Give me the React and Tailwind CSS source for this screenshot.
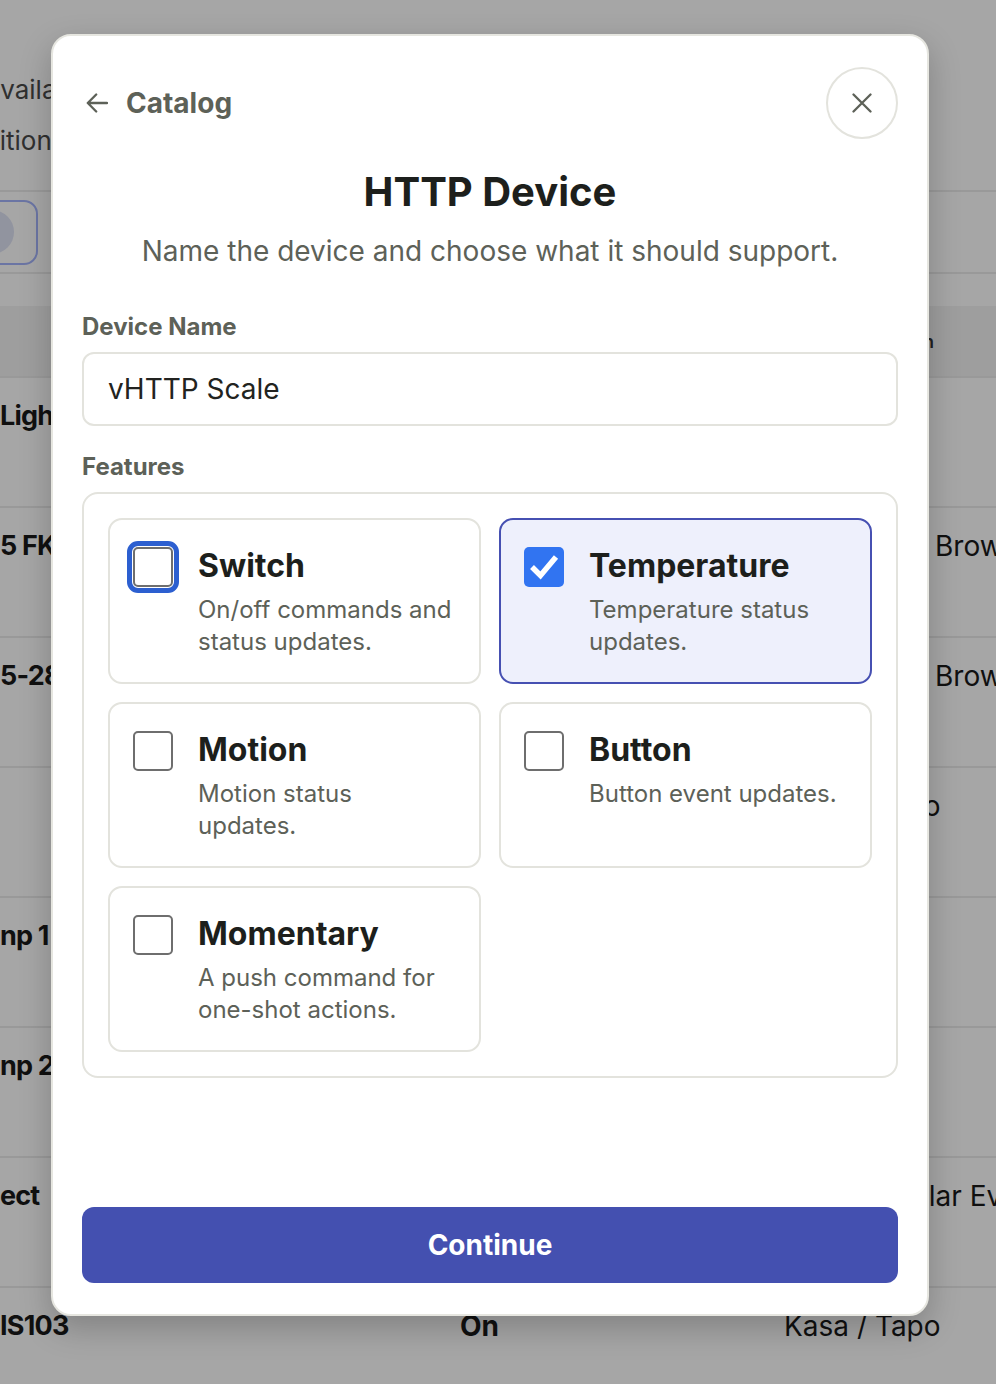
import React from "react";

function Check({ checked, focused }) {
  if (checked) {
    return (
      <div className="w-[40px] h-[40px] shrink-0 rounded-[5px] bg-[#3174f1] flex items-center justify-center">
        <svg width="40" height="40" viewBox="0 0 40 40">
          <polyline points="8,20 16.5,28.5 32,10" fill="none" stroke="#ffffff" strokeWidth="5.5" strokeLinecap="butt" strokeLinejoin="miter" />
        </svg>
      </div>
    );
  }
  return (
    <div
      className={
        focused
          ? "w-[40px] h-[40px] shrink-0 rounded-[5px] border-2 border-[#6e6e6e] bg-white outline-[5px] outline-solid outline-[#2c5fd0] outline-offset-[1px]"
          : "w-[40px] h-[40px] shrink-0 rounded-[5px] border-2 border-[#6e6e6e] bg-white"
      }
    />
  );
}

function Card({ title, desc, checked, focused }) {
  return (
    <div
      className={
        checked
          ? "h-[166px] rounded-[14px] border-2 border-[#4650b2] bg-[#eef0fc] pt-[27px] pl-[23px] pr-[27px] flex gap-[25px]"
          : "h-[166px] rounded-[14px] border-2 border-[#e3e3dd] bg-white pt-[27px] pl-[23px] pr-[27px] flex gap-[25px]"
      }
    >
      <Check checked={checked} focused={focused} />
      <div className="flex-1 min-w-0">
        <div className="mt-[1px] text-[32px] leading-[36px] font-bold text-[#1d1f1c]">{title}</div>
        <div className="mt-[10px] text-[24px] leading-[32px] text-[#5d6158]">{desc}</div>
      </div>
    </div>
  );
}

function Row({ left, mid, right }) {
  return (
    <div className="h-[130px] border-b-2 border-[#ebebeb] grid grid-cols-[440px_344px_156px] pt-[20px] text-[28px] leading-[36px] text-[#1a1a1a] whitespace-nowrap">
      <div className="font-bold text-[27px] tracking-[-0.8px]">{left}</div>
      <div className="pl-[20px] font-bold">{mid}</div>
      <div>{right}</div>
    </div>
  );
}

export default function App() {
  return (
    <div className="relative h-[1384px] w-[996px] overflow-hidden bg-white font-['Inter','Noto_Sans',sans-serif]">
      {/* background page */}
      <div>
        <div className="h-[190px] pt-[72px] text-[26px] leading-[36px] text-[#4a4a4a] whitespace-nowrap">
          <div className="-ml-[14px]">available devices</div>
          <div className="-ml-[62px] mt-[15px]">conditional options</div>
        </div>
        <div className="h-[82px] border-t-2 border-[#ebebeb] flex items-center">
          <div className="-ml-[40px] w-[78px] h-[65px] rounded-[14px] border-2 border-[#a5b4fc] bg-white flex items-center pl-[8px]">
            <div className="w-[44px] h-[44px] rounded-full bg-[#dfe3f5]" />
          </div>
        </div>
        <div className="h-[34px] border-t-2 border-[#ebebeb]" />
        <div className="h-[72px] bg-[#f3f3f3] border-b-2 border-[#ebebeb] grid grid-cols-[440px_344px_156px] items-center text-[18px] font-semibold text-[#333]">
          <div />
          <div>Status</div>
          <div className="text-right pr-[6px]">Connection</div>
        </div>
        <Row left="Light Strip" mid="On" right="" />
        <Row left="5 FK Sensor" mid="Off" right="Webhook / Browser" />
        <Row left="5-28 Plug" mid="On" right="Webhook / Browser" />
        <Row left="" mid="Off" right="Kasa / Tapo" />
        <Row left="np 1" mid="On" right="" />
        <Row left="np 2" mid="On" right="" />
        <Row left="ect" mid="Off" right="Sunrise/Solar Events" />
        <Row left="IS103" mid="On" right="Kasa / Tapo" />
      </div>

      {/* overlay + modal */}
      <div className="absolute inset-0 bg-black/35 pl-[51px] pt-[34px]">
        <div className="w-[878px] h-[1282px] bg-white rounded-[20px] border-2 border-[#e6e6e0] shadow-[0_12px_32px_rgba(0,0,0,0.22)] flex flex-col px-[29px] pt-[31px] pb-[31px]">
          <div className="h-[72px] flex items-center justify-between">
            <div className="flex items-center gap-[18px] pl-[4px]">
              <svg width="22" height="20" viewBox="0 0 22 20" fill="none">
                <path d="M21 10H1.8M10.2 1.5L1.8 10L10.2 18.5" stroke="#5d6158" strokeWidth="2.3" strokeLinecap="round" strokeLinejoin="round" />
              </svg>
              <span className="text-[28px] leading-[36px] font-bold text-[#5d6158]">Catalog</span>
            </div>
            <div className="w-[72px] h-[72px] rounded-full border-2 border-[#e3e3dd] flex items-center justify-center">
              <svg width="20" height="20" viewBox="0 0 20 20" fill="none">
                <path d="M1.5 1.5L18.5 18.5M18.5 1.5L1.5 18.5" stroke="#5d6158" strokeWidth="2.3" strokeLinecap="round" />
              </svg>
            </div>
          </div>

          <h1 className="mt-[29px] text-center text-[40px] leading-[48px] font-bold text-[#1d1f1c]">HTTP Device</h1>
          <p className="mt-[17px] text-center text-[28px] leading-[36px] text-[#5d6158]">
            Name the device and choose what it should support.
          </p>

          <div className="mt-[43px] text-[24px] leading-[30px] font-bold text-[#5d6158]">Device Name</div>
          <div className="mt-[10px] h-[74px] rounded-[12px] border-2 border-[#e3e3dd] px-[24px] flex items-center text-[28px] text-[#222320]">
            vHTTP Scale
          </div>

          <div className="mt-[26px] text-[24px] leading-[30px] font-bold text-[#5d6158]">Features</div>
          <div className="mt-[10px] rounded-[16px] border-2 border-[#e3e3dd] p-[24px] grid grid-cols-2 gap-[18px]">
            <Card title="Switch" desc="On/off commands and status updates." focused />
            <Card title="Temperature" desc="Temperature status updates." checked />
            <Card title="Motion" desc="Motion status updates." />
            <Card title="Button" desc="Button event updates." />
            <Card title="Momentary" desc="A push command for one-shot actions." />
          </div>

          <div className="flex-1" />
          <button className="h-[76px] w-full rounded-[12px] bg-[#4450b0] text-white text-[28px] font-bold">
            Continue
          </button>
        </div>
      </div>
    </div>
  );
}
